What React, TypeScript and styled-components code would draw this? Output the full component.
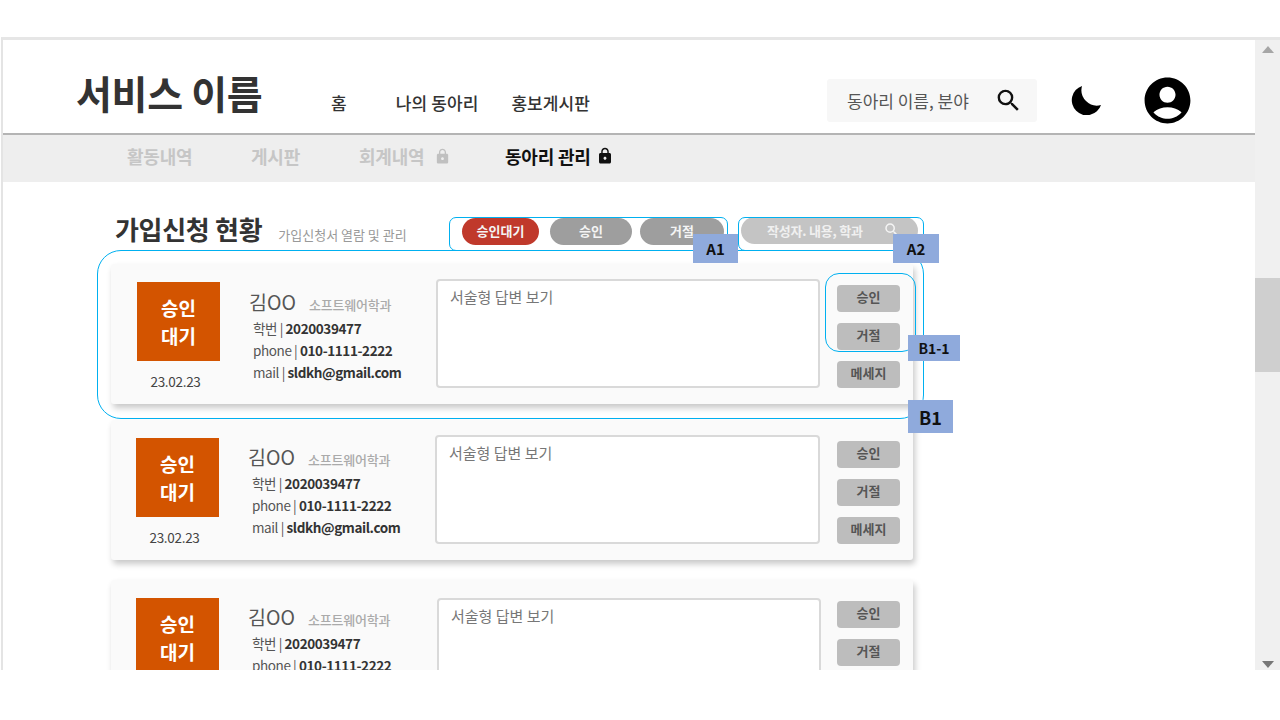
import styled, { createGlobalStyle } from "styled-components";
import { MdAccountCircle, MdLock, MdSearch } from "react-icons/md";

const GlobalStyles = createGlobalStyle`
  html, body {
    margin: 0;
    background: #fff;
    font-family: "Noto Sans CJK KR", "Noto Sans", sans-serif;
  }

  * {
    box-sizing: border-box;
  }
`;

const Stage = styled.div`
  position: relative;
  width: 1280px;
  height: 720px;
  padding: 37px 0 50px 1px;
  overflow: hidden;
`;

const Frame = styled.div`
  display: flex;
  height: 633px;
  border-top: 3px solid #e6e6e6;
  border-left: 2px solid #e4e4e4;
`;

const Main = styled.div`
  flex: 1;
  min-width: 0;
  overflow: hidden;
`;

const Header = styled.header`
  display: flex;
  align-items: center;
  height: 95px;
  padding-left: 73px;
  border-bottom: 2px solid #b4b4b4;
`;

const Logo = styled.h1`
  width: 255px;
  margin: 11px 0 0;
  font-size: 39px;
  font-weight: 700;
  letter-spacing: -0.3px;
  color: #333;
  white-space: nowrap;
`;

const TopNav = styled.nav`
  display: flex;
  gap: 33px;
  width: 496px;
  margin-top: 31px;
`;

const TopLink = styled.a`
  font-size: 17px;
  font-weight: 500;
  letter-spacing: 0.1px;
  color: #333;

  &:first-child {
    margin-right: 16px;
  }
`;

const HeaderSearch = styled.div`
  display: flex;
  align-items: center;
  justify-content: space-between;
  width: 210px;
  height: 43px;
  margin-top: 28px;
  padding: 0 14px 0 20px;
  background: #f7f7f7;
  border-radius: 3px;
  font-size: 17px;
  color: #555;
  white-space: nowrap;
`;

const Moon = styled.svg`
  width: 30px;
  height: 30px;
  margin: 27px 0 0 34px;
`;

const Avatar = styled(MdAccountCircle)`
  width: 55px;
  height: 55px;
  margin: 28px 0 0 39px;
  color: #000;
`;

const SubNav = styled.nav`
  display: flex;
  align-items: center;
  height: 47px;
  padding: 0 0 5px 124px;
  background: #eee;
`;

const SubLink = styled.a<{ $active?: boolean; $width: number }>`
  display: flex;
  align-items: center;
  gap: ${(p) => (p.$active ? 5 : 10)}px;
  width: ${(p) => p.$width}px;
  font-size: 18px;
  font-weight: 700;
  letter-spacing: -0.2px;
  color: ${(p) => (p.$active ? "#111" : "#c6c6c6")};
  white-space: nowrap;
`;

const Section = styled.section`
  padding: 35px 0 0 108px;
`;

const SectionHeader = styled.div`
  display: flex;
  align-items: flex-start;
  height: 47px;
  padding-left: 4px;
`;

const TitleGroup = styled.div`
  display: flex;
  align-items: baseline;
  gap: 16px;
  width: 347px;
  margin-top: -7px;
`;

const Title = styled.h2`
  margin: 0;
  font-size: 26px;
  font-weight: 700;
  letter-spacing: -0.3px;
  color: #333;
  white-space: nowrap;
`;

const Subtitle = styled.span`
  font-size: 13px;
  color: #999;
  white-space: nowrap;
`;

const Filters = styled.div`
  display: flex;
  gap: 8px;
  margin-top: 1px;
`;

const Pill = styled.button<{ $active?: boolean; $width: number }>`
  width: ${(p) => p.$width}px;
  height: 27px;
  margin-right: ${(p) => (p.$active ? 3 : 0)}px;
  padding: 0 0 2px;
  border: 0;
  border-radius: 14px;
  background: ${(p) => (p.$active ? "#c0392b" : "#9e9e9e")};
  font-family: inherit;
  font-size: 13px;
  font-weight: 700;
  color: #f4f4f4;
`;

const SearchPill = styled.div`
  display: flex;
  align-items: center;
  justify-content: space-between;
  width: 177px;
  height: 27px;
  margin-left: 17px;
  padding: 0 17px 1px 26px;
  border-radius: 14px;
  background: #c4c4c4;
  font-size: 13px;
  font-weight: 700;
  letter-spacing: -0.2px;
  color: #f0f0f0;
  white-space: nowrap;
`;

const Card = styled.article<{ $gapAfter: number; $top: number; $left: number }>`
  display: flex;
  width: 802px;
  height: 140px;
  margin-bottom: ${(p) => p.$gapAfter}px;
  padding: ${(p) => p.$top}px 0 0 ${(p) => p.$left}px;
  background: #fafafa;
  border-radius: 3px;
  box-shadow: 2px 4px 6px rgba(0, 0, 0, 0.22);
`;

const StatusColumn = styled.div`
  display: flex;
  flex-direction: column;
  align-items: center;
  width: 83px;
  margin-right: 29px;
`;

const StatusBox = styled.div`
  display: flex;
  align-items: center;
  justify-content: center;
  width: 83px;
  height: 79px;
  background: #d35400;
  font-size: 19px;
  font-weight: 700;
  line-height: 28px;
  text-align: center;
  color: #fff;
`;

const DateText = styled.div`
  margin: 10px 6px 0 0;
  font-size: 13.5px;
  line-height: 20px;
  letter-spacing: -0.3px;
  color: #444;
`;

const Info = styled.div<{ $width: number; $top: number }>`
  width: ${(p) => p.$width}px;
  padding-top: ${(p) => p.$top}px;
`;

const NameRow = styled.div`
  display: flex;
  align-items: baseline;
  gap: 13px;
  height: 29px;
  line-height: 27px;
`;

const Name = styled.span`
  font-size: 19.5px;
  color: #555;
`;

const Dept = styled.span`
  font-size: 13px;
  font-weight: 500;
  letter-spacing: -0.2px;
  color: #aaa;
`;

const Detail = styled.div`
  padding-left: 4px;
  font-size: 13.5px;
  line-height: 22px;
  letter-spacing: -0.4px;
  color: #555;
  white-space: nowrap;

  b {
    font-weight: 700;
    color: #333;
  }
`;

const Answer = styled.div<{ $width: number; $top: number }>`
  width: ${(p) => p.$width}px;
  height: 109px;
  margin-top: ${(p) => p.$top}px;
  padding: 5px 12px;
  background: #fff;
  border: 2px solid #d9d9d9;
  border-radius: 4px;
  font-size: 15px;
  line-height: 22px;
  color: #777;
`;

const Actions = styled.div<{ $left: number }>`
  display: flex;
  flex-direction: column;
  gap: 11px;
  margin: 3px 0 0 ${(p) => p.$left}px;
`;

const ActionButton = styled.button`
  width: 63px;
  height: 27px;
  padding: 0 0 5px;
  border: 0;
  border-radius: 4px;
  background: #bdbdbd;
  font-family: inherit;
  font-size: 13px;
  font-weight: 700;
  color: #555;
`;

const Scrollbar = styled.div`
  display: flex;
  flex-direction: column;
  align-items: center;
  width: 25px;
  background: #f0f0f0;
`;

const ArrowUp = styled.div`
  width: 0;
  height: 0;
  margin-top: 6px;
  border-left: 6px solid transparent;
  border-right: 6px solid transparent;
  border-bottom: 7px solid #a6a6a6;
`;

const Thumb = styled.div`
  width: 100%;
  height: 94px;
  margin-top: 225px;
  background: #cfcfcf;
`;

const ArrowDown = styled.div`
  width: 0;
  height: 0;
  margin-top: auto;
  margin-bottom: 2px;
  border-left: 6px solid transparent;
  border-right: 6px solid transparent;
  border-top: 7px solid #777;
`;

const Outline = styled.div<{ $x: number; $y: number; $w: number; $h: number; $radius: number }>`
  position: absolute;
  left: ${(p) => p.$x}px;
  top: ${(p) => p.$y}px;
  width: ${(p) => p.$w}px;
  height: ${(p) => p.$h}px;
  border: 1px solid #00b0f0;
  border-radius: ${(p) => p.$radius}px;
  pointer-events: none;
`;

const Tag = styled.div<{ $x: number; $y: number; $w: number; $h: number; $size: number }>`
  position: absolute;
  left: ${(p) => p.$x}px;
  top: ${(p) => p.$y}px;
  display: flex;
  align-items: center;
  justify-content: center;
  width: ${(p) => p.$w}px;
  height: ${(p) => p.$h}px;
  background: #8faadc;
  font-size: ${(p) => p.$size}px;
  font-weight: 700;
  color: #111;
`;

const cards = [
  { top: 18, left: 26, gapAfter: 16, infoWidth: 187, infoTop: 6, answerWidth: 384, answerTop: -3, actionsLeft: 17 },
  { top: 18, left: 25, gapAfter: 20, infoWidth: 187, infoTop: 5, answerWidth: 385, answerTop: -3, actionsLeft: 17 },
  { top: 18, left: 25, gapAfter: 0, infoWidth: 189, infoTop: 5, answerWidth: 384, answerTop: 0, actionsLeft: 16 },
];

const App = () => {
  return (
    <Stage>
      <GlobalStyles />
      <Frame>
        <Main>
          <Header>
            <Logo>서비스 이름</Logo>
            <TopNav>
              <TopLink>홈</TopLink>
              <TopLink>나의 동아리</TopLink>
              <TopLink>홍보게시판</TopLink>
            </TopNav>
            <HeaderSearch>
              동아리 이름, 분야
              <MdSearch size={29} color="#111" />
            </HeaderSearch>
            <Moon viewBox="0 0 30 30">
              <path d="M11 1A15 15 0 1 0 30 20A15.5 15.5 0 0 1 11 1Z" fill="#000" />
            </Moon>
            <Avatar />
          </Header>
          <SubNav>
            <SubLink $width={124}>활동내역</SubLink>
            <SubLink $width={108}>게시판</SubLink>
            <SubLink $width={146}>
              회계내역 <MdLock size={17} color="#c0c0c0" />
            </SubLink>
            <SubLink $active $width={140}>
              동아리 관리 <MdLock size={18} color="#111" />
            </SubLink>
          </SubNav>
          <Section>
            <SectionHeader>
              <TitleGroup>
                <Title>가입신청 현황</Title>
                <Subtitle>가입신청서 열람 및 관리</Subtitle>
              </TitleGroup>
              <Filters>
                <Pill $active $width={77}>승인대기</Pill>
                <Pill $width={82}>승인</Pill>
                <Pill $width={84}>거절</Pill>
              </Filters>
              <SearchPill>
                작성자. 내용, 학과
                <MdSearch size={18} color="#f4f4f4" />
              </SearchPill>
            </SectionHeader>
            {cards.map((card, i) => (
              <Card key={i} $top={card.top} $left={card.left} $gapAfter={card.gapAfter}>
                <StatusColumn>
                  <StatusBox>
                    승인
                    <br />
                    대기
                  </StatusBox>
                  <DateText>23.02.23</DateText>
                </StatusColumn>
                <Info $width={card.infoWidth} $top={card.infoTop}>
                  <NameRow>
                    <Name>김OO</Name>
                    <Dept>소프트웨어학과</Dept>
                  </NameRow>
                  <Detail>
                    학번 | <b>2020039477</b>
                  </Detail>
                  <Detail>
                    phone | <b>010-1111-2222</b>
                  </Detail>
                  <Detail>
                    mail | <b>sldkh@gmail.com</b>
                  </Detail>
                </Info>
                <Answer $width={card.answerWidth} $top={card.answerTop}>서술형 답변 보기</Answer>
                <Actions $left={card.actionsLeft}>
                  <ActionButton>승인</ActionButton>
                  <ActionButton>거절</ActionButton>
                  <ActionButton>메세지</ActionButton>
                </Actions>
              </Card>
            ))}
          </Section>
        </Main>
        <Scrollbar>
          <ArrowUp />
          <Thumb />
          <ArrowDown />
        </Scrollbar>
      </Frame>

      <Outline $x={449} $y={217} $w={279} $h={34} $radius={7} />
      <Outline $x={738} $y={217} $w={186} $h={34} $radius={7} />
      <Outline $x={97} $y={250} $w={827} $h={169} $radius={24} />
      <Outline $x={825} $y={273} $w={91} $h={79} $radius={14} />
      <Tag $x={693} $y={234} $w={45} $h={29} $size={15}>A1</Tag>
      <Tag $x={893} $y={234} $w={46} $h={29} $size={15}>A2</Tag>
      <Tag $x={908} $y={335} $w={52} $h={26} $size={14}>B1-1</Tag>
      <Tag $x={908} $y={400} $w={45} $h={33} $size={18}>B1</Tag>
    </Stage>
  );
};

export default App;
